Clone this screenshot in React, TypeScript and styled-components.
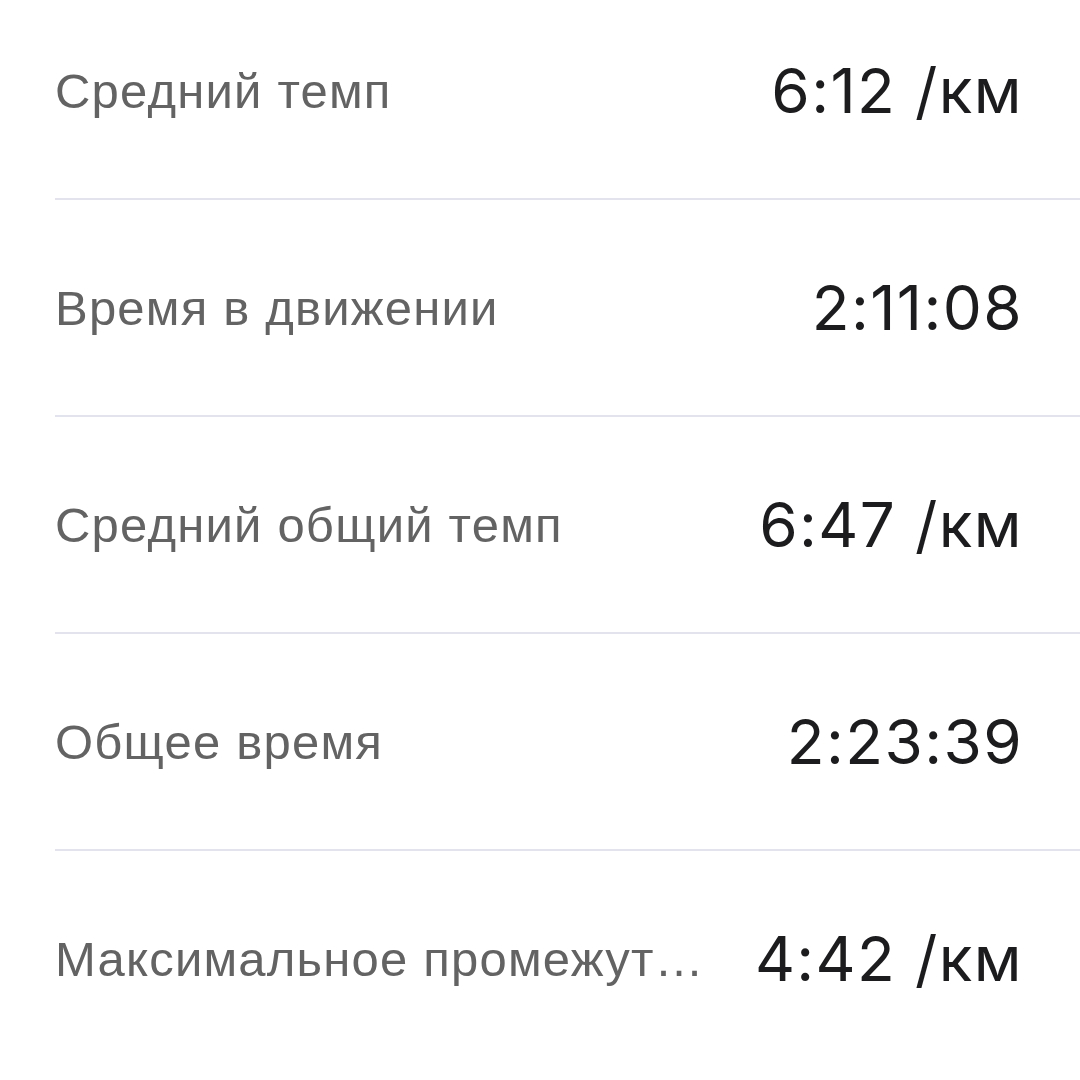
import React from 'react'
import styled, { createGlobalStyle } from 'styled-components'

const GlobalStyle = createGlobalStyle`
    html, body {
        margin: 0;
        padding: 0;
        background: #ffffff;
    }
    body {
        width: 1080px;
        height: 1080px;
        overflow: hidden;
    }
`

const List = styled.div`
    display: flex;
    flex-direction: column;
    margin-top: -17px;
    padding-left: 55px;
`

const Row = styled.div<{ last?: boolean }>`
    height: 215px;
    display: flex;
    align-items: center;
    gap: 30px;
    padding-right: 57px;
    border-bottom: ${(props) => (props.last ? 'none' : '2px solid #e3e3ee')};
`

const Label = styled.div`
    flex: 1;
    min-width: 0;
    font-family: 'Liberation Sans', Arial, sans-serif;
    font-size: 49px;
    letter-spacing: 1.2px;
    color: #636363;
    white-space: nowrap;
    overflow: hidden;
    text-overflow: ellipsis;
`

const Value = styled.div`
    flex-shrink: 0;
    font-family: Inter, 'Noto Sans', sans-serif;
    font-size: 62px;
    font-weight: 400;
    letter-spacing: 1.4px;
    color: #1c1c1e;
    white-space: nowrap;
`

type Stat = {
    label: string
    value: string
}

const stats: Stat[] = [
    { label: 'Средний темп', value: '6:12 /км' },
    { label: 'Время в движении', value: '2:11:08' },
    { label: 'Средний общий темп', value: '6:47 /км' },
    { label: 'Общее время', value: '2:23:39' },
    { label: 'Максимальное промежут…', value: '4:42 /км' },
]

const App = () => {
    return (
        <>
            <GlobalStyle />
            <List>
                {stats.map((s, i) => (
                    <Row key={s.label} last={i === stats.length - 1}>
                        <Label>{s.label}</Label>
                        <Value>{s.value}</Value>
                    </Row>
                ))}
            </List>
        </>
    )
}

export default App
